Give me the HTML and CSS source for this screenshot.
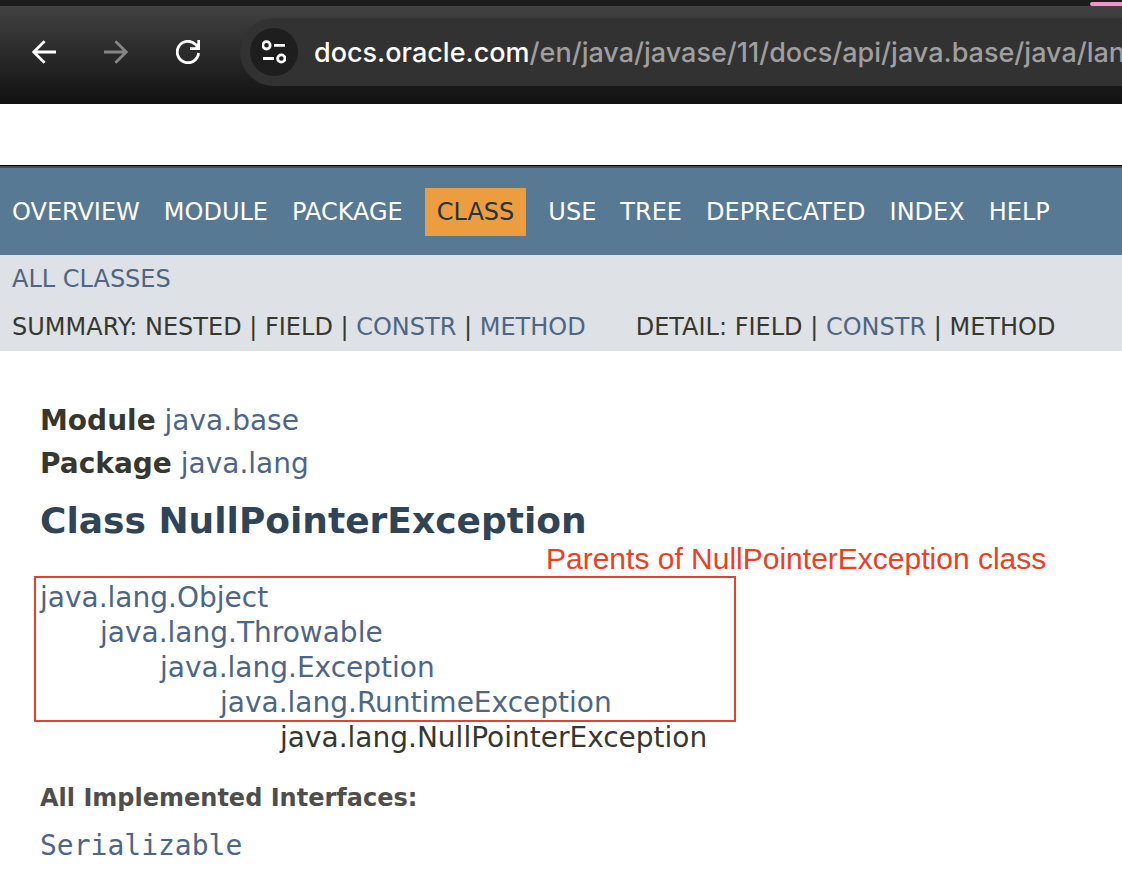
FILE: index.html
```html
<!DOCTYPE html>
<html lang="en">
<head>
<meta charset="utf-8">
<title>NullPointerException (Java SE 11)</title>
<link rel="stylesheet" href="styles.css">
</head>
<body>
<header class="browser">
  <div class="tab-strip"><span class="tab-group"></span></div>
  <div class="toolbar">
    <div class="toolbar-buttons">
      <button class="icon-button" type="button" aria-label="Back">
        <svg class="icon" viewBox="0 0 24 24"><path d="M24 12H2M12.600 1.200L1.800 12l10.800 10.800"/></svg>
      </button>
      <button class="icon-button" type="button" aria-label="Forward" disabled>
        <svg class="icon" viewBox="0 0 24 24"><path d="M0 12h22M11.400 1.200L22.200 12 11.400 22.800"/></svg>
      </button>
      <button class="icon-button" type="button" aria-label="Reload">
        <svg class="icon" viewBox="0 0 24 24"><path d="M22.600 13A10.700 10.700 0 1 1 19.600 4.500L21.500 7M22.700 0v8.700H14"/><path class="solid" d="M22 5v4h-4z"/></svg>
      </button>
    </div>
    <div class="address-bar">
      <button class="site-info" type="button" aria-label="View site information">
        <svg class="icon" viewBox="0 0 24 24"><circle cx="4.500" cy="5.300" r="3.700"/><path d="M12 5.300h11M1 18.500h11"/><circle cx="19.300" cy="18.500" r="3.700"/></svg>
      </button>
      <div class="url" role="textbox" aria-label="Address" contenteditable="true" spellcheck="false"><span class="url-host">docs.oracle.com</span>/en/java/javase/11/docs/api/java.base/java/lan</div>
    </div>
  </div>
</header>

<nav class="top-nav" aria-label="Documentation">
  <ul class="nav-list">
    <li><a href="#overview">OVERVIEW</a></li>
    <li><a href="#module">MODULE</a></li>
    <li><a href="#package">PACKAGE</a></li>
    <li class="current">CLASS</li>
    <li><a href="#use">USE</a></li>
    <li><a href="#tree">TREE</a></li>
    <li><a href="#deprecated">DEPRECATED</a></li>
    <li><a href="#index">INDEX</a></li>
    <li><a href="#help">HELP</a></li>
  </ul>
</nav>
<nav class="sub-nav" aria-label="Class">
  <div class="sub-row"><a href="#classes">ALL CLASSES</a></div>
  <div class="sub-row">
    <span>SUMMARY: NESTED | FIELD | <a href="#constr">CONSTR</a> | <a href="#method">METHOD</a></span>
    <span>DETAIL: FIELD | <a href="#constr-detail">CONSTR</a> | METHOD</span>
  </div>
</nav>

<main class="content">
  <div class="sub-title"><b>Module</b> <a href="#java.base">java.base</a></div>
  <div class="sub-title"><b>Package</b> <a href="#java.lang">java.lang</a></div>
  <h1 class="title">Class NullPointerException</h1>
  <div class="inheritance">
    <p class="note">Parents of NullPointerException class</p>
    <ul class="tree">
      <li><a href="#Object">java.lang.Object</a>
        <ul>
          <li><a href="#Throwable">java.lang.Throwable</a>
            <ul>
              <li><a href="#Exception">java.lang.Exception</a>
                <ul>
                  <li><a href="#RuntimeException">java.lang.RuntimeException</a>
                    <ul>
                      <li>java.lang.NullPointerException</li>
                    </ul>
                  </li>
                </ul>
              </li>
            </ul>
          </li>
        </ul>
      </li>
    </ul>
    <div class="frame"></div>
  </div>
  <dl class="interfaces">
    <dt>All Implemented Interfaces:</dt>
    <dd><a href="#Serializable">Serializable</a></dd>
  </dl>
</main>
</body>
</html>
```

FILE: styles.css
```css
* { box-sizing: border-box; }

body {
  margin: 0;
  overflow-x: hidden;
  background: #fff;
  color: #363830;
  font-family: "DejaVu Sans", Arial, sans-serif;
  font-size: 28px;
}

a { color: #4e6684; text-decoration: none; }
ul { margin: 0; padding: 0; list-style: none; }

/* Browser chrome */
.tab-strip {
  display: flex;
  justify-content: flex-end;
  align-items: flex-end;
  height: 6px;
  background: #1c1c1c;
}
.tab-group {
  width: 32px;
  height: 4px;
  border-radius: 2px 0 0 2px;
  background: #f394cb;
}
.toolbar {
  display: flex;
  padding: 12px 0 18px 20px;
  background: linear-gradient(#424242, #111);
}
.toolbar-buttons {
  display: flex;
  align-items: center;
  gap: 24px;
  margin-right: 28px;
}
.icon-button, .site-info {
  display: flex;
  align-items: center;
  justify-content: center;
  width: 48px;
  height: 48px;
  padding: 0;
  border: 0;
  border-radius: 50%;
  background: none;
  color: #fff;
}
.icon-button:disabled { color: #858585; }
.icon {
  width: 24px;
  height: 24px;
  fill: none;
  stroke: currentColor;
  stroke-width: 2.8;
}
.icon .solid { fill: currentColor; stroke: none; }
.address-bar {
  display: flex;
  flex: 1;
  align-items: center;
  gap: 16px;
  min-width: 0;
  padding: 10px 0 10px 10px;
  border-radius: 34px 0 0 34px;
  background: #323232;
}
.site-info { flex: none; background: #1e1e1e; }
.url {
  flex: 1;
  min-width: 0;
  padding-top: 2px;
  overflow: hidden;
  color: #9f9f9f;
  font: 500 27px/46px Inter, sans-serif;
  white-space: nowrap;
}
.url-host { color: #fff; }

/* Documentation navigation */
.top-nav {
  margin-top: 61px;
  padding: 22px 0 19px;
  border-top: 1px solid #000;
  box-shadow: inset 0 2px #4d4d4d;
  background: #587993;
  color: #fff;
  font-size: 24px;
  line-height: 28px;
}
.nav-list { display: flex; }
.nav-list li { padding: 10px 12px; }
.nav-list a { color: #fff; }
.nav-list .current {
  margin: 0 10px;
  background: #eb9d40;
  color: #253441;
}
.sub-nav {
  background: #dee1e6;
  font-size: 24px;
  line-height: 48px;
}
.sub-row { display: flex; gap: 50px; padding: 0 12px; white-space: nowrap; }

/* Class description */
.content { padding: 48px 40px 0; }
.sub-title { line-height: 43px; }
.title {
  margin: 12px 0 35px;
  color: #2f4456;
  font-size: 36px;
  line-height: 48px;
}
.inheritance { position: relative; line-height: 35px; }
.tree ul { padding-left: 60px; }
.frame {
  position: absolute;
  top: -4px;
  left: -6px;
  width: 702px;
  height: 146px;
  border: 2px solid #eb4025;
  pointer-events: none;
}
.note {
  position: absolute;
  top: -41px;
  left: 506px;
  margin: 0;
  color: #eb4025;
  font: 30px/40px "Liberation Sans", Arial, sans-serif;
  white-space: nowrap;
}
.interfaces { margin: 23px 0 0; }
.interfaces dt {
  color: #4e4e4e;
  font-size: 24px;
  font-weight: bold;
  line-height: 40px;
}
.interfaces dd {
  margin: 8px 0 0;
  font-family: "DejaVu Sans Mono", monospace;
  line-height: 40px;
}
```
